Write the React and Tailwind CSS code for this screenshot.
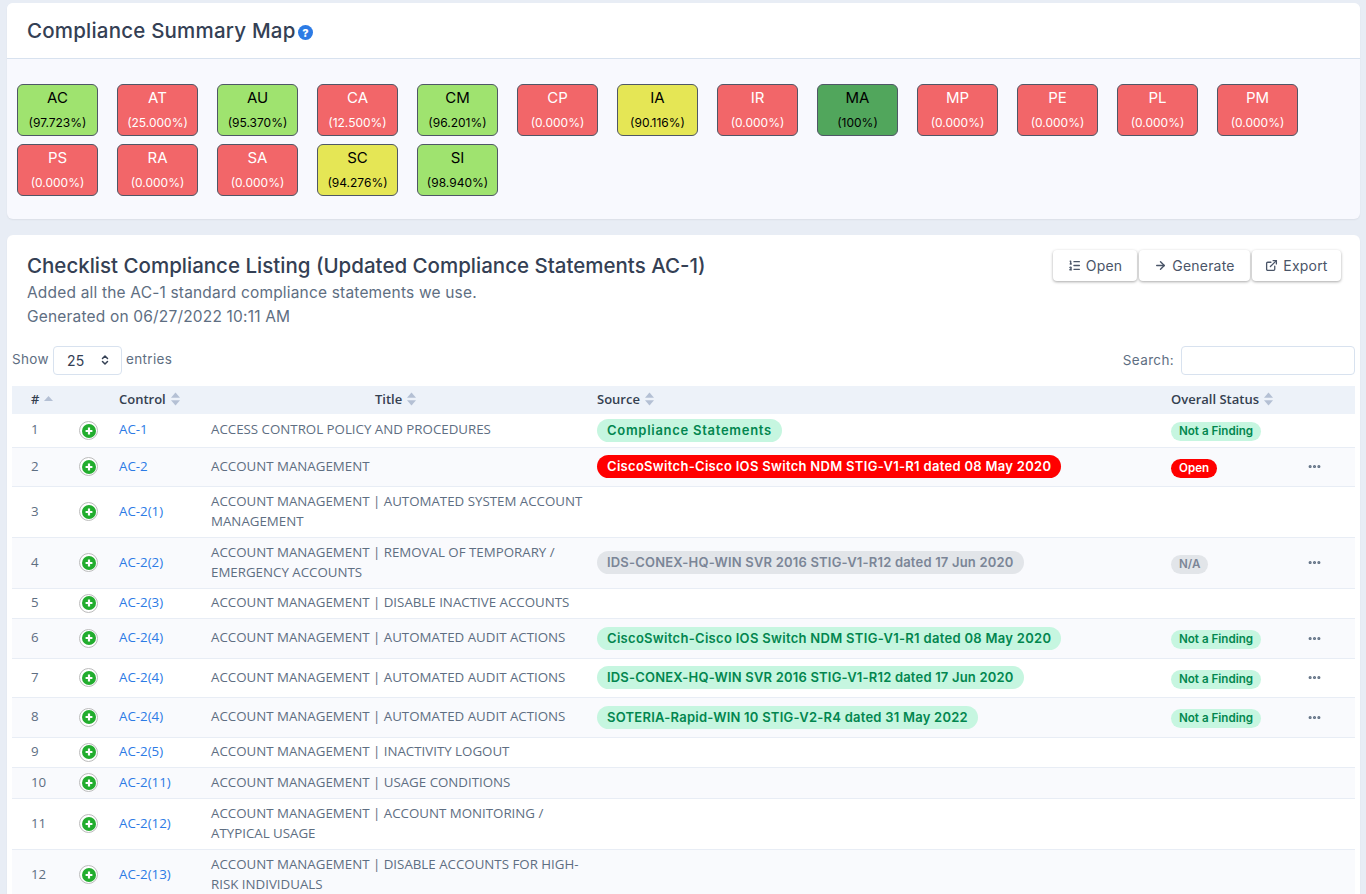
import React from "react";
import { ListOrdered, ArrowRight, ExternalLink, ChevronsUpDown, MoreHorizontal } from "lucide-react";

const tiles = [
  ["AC", "97.723%", "g"], ["AT", "25.000%", "r"], ["AU", "95.370%", "g"], ["CA", "12.500%", "r"], ["CM", "96.201%", "g"],
  ["CP", "0.000%", "r"], ["IA", "90.116%", "y"], ["IR", "0.000%", "r"], ["MA", "100%", "d"], ["MP", "0.000%", "r"],
  ["PE", "0.000%", "r"], ["PL", "0.000%", "r"], ["PM", "0.000%", "r"], ["PS", "0.000%", "r"], ["RA", "0.000%", "r"],
  ["SA", "0.000%", "r"], ["SC", "94.276%", "y"], ["SI", "98.940%", "g"],
];
const tileCls = {
  g: "bg-[#9fe36f] text-black",
  r: "bg-[#f26669] text-white",
  y: "bg-[#e5e655] text-black",
  d: "bg-[#51a65c] text-black",
};

const CISCO = "CiscoSwitch-Cisco IOS Switch NDM STIG-V1-R1 dated 08 May 2020";
const IDS = "IDS-CONEX-HQ-WIN SVR 2016 STIG-V1-R12 dated 17 Jun 2020";
const SOT = "SOTERIA-Rapid-WIN 10 STIG-V2-R4 dated 31 May 2022";
const tr = {
  "Compliance Statements": "tracking-[0.72px]",
  [CISCO]: "tracking-[0.3px]",
  [IDS]: "tracking-[0.19px]",
  [SOT]: "tracking-[0.24px]",
};
const rows = [
  { h: "h-[33px]", c: "AC-1", t: "ACCESS CONTROL POLICY AND PROCEDURES", s: "Compliance Statements", k: "g", st: "Not a Finding" },
  { h: "h-[39px]", c: "AC-2", t: "ACCOUNT MANAGEMENT", s: CISCO, k: "r", st: "Open", m: true },
  { h: "h-[51px]", c: "AC-2(1)", t: "ACCOUNT MANAGEMENT | AUTOMATED SYSTEM ACCOUNT MANAGEMENT" },
  { h: "h-[51px]", c: "AC-2(2)", t: "ACCOUNT MANAGEMENT | REMOVAL OF TEMPORARY / EMERGENCY ACCOUNTS", s: IDS, k: "n", st: "N/A", m: true },
  { h: "h-[30px]", c: "AC-2(3)", t: "ACCOUNT MANAGEMENT | DISABLE INACTIVE ACCOUNTS" },
  { h: "h-[40px]", c: "AC-2(4)", t: "ACCOUNT MANAGEMENT | AUTOMATED AUDIT ACTIONS", s: CISCO, k: "g", st: "Not a Finding", m: true },
  { h: "h-[39px]", c: "AC-2(4)", t: "ACCOUNT MANAGEMENT | AUTOMATED AUDIT ACTIONS", s: IDS, k: "g", st: "Not a Finding", m: true },
  { h: "h-[40px]", c: "AC-2(4)", t: "ACCOUNT MANAGEMENT | AUTOMATED AUDIT ACTIONS", s: SOT, k: "g", st: "Not a Finding", m: true },
  { h: "h-[30px]", c: "AC-2(5)", t: "ACCOUNT MANAGEMENT | INACTIVITY LOGOUT" },
  { h: "h-[31px]", c: "AC-2(11)", t: "ACCOUNT MANAGEMENT | USAGE CONDITIONS" },
  { h: "h-[51px]", c: "AC-2(12)", t: "ACCOUNT MANAGEMENT | ACCOUNT MONITORING / ATYPICAL USAGE" },
  { h: "h-[51px]", c: "AC-2(13)", t: "ACCOUNT MANAGEMENT | DISABLE ACCOUNTS FOR HIGH-RISK INDIVIDUALS" },
];
const badgeCls = {
  g: "bg-[#c6f6e0] text-[#02864f]",
  r: "bg-[#ff0000] text-white",
  n: "bg-[#e2e5e9] text-[#7b8597]",
};

const SortIcon = ({ up }) => (
  <svg width="9" height="14" viewBox="0 0 9 14" className="ml-[5px] inline-block align-[-2px]">
    {up ? (
      <path d="M4.5 4 L9 9 H0 Z" fill="#b4c0d4" />
    ) : (
      <>
        <path d="M4.5 0.5 L9 5.8 H0 Z" fill="#b4c0d4" />
        <path d="M4.5 13.5 L9 8.2 H0 Z" fill="#b4c0d4" />
      </>
    )}
  </svg>
);

const PlusIcon = () => (
  <span className="inline-flex h-[19px] w-[19px] items-center justify-center rounded-full border border-[#bcbcbc] bg-white align-middle">
    <svg width="14" height="14" viewBox="0 0 14 14">
      <circle cx="7" cy="7" r="7" fill="#22ad2e" />
      <path d="M7 3.6 V10.4 M3.6 7 H10.4" stroke="#fff" strokeWidth="2.2" />
    </svg>
  </span>
);

const Btn = ({ icon, children, w }) => (
  <button className={`flex h-[31px] ${w} items-center justify-center gap-[5px] rounded-[4px] bg-white text-[14px] tracking-[0.2px] text-[#4a5568] shadow-[0_1px_3px_rgba(0,0,0,0.35)]`}>
    {icon}
    {children}
  </button>
);

const head = "[font-family:Inter,'Liberation_Sans',sans-serif]";

export default function App() {
  return (
    <div className="h-[894px] overflow-hidden bg-[#e8edf5] pl-[7px] pr-[6px] pt-[3px] font-['Open_Sans',sans-serif] text-[#525f7f]">
      <section className="overflow-hidden rounded-[6px] bg-[#f8f9fe] shadow-[0_1px_2px_rgba(0,0,0,0.06)]">
        <div className={`flex h-[56px] items-center border-b border-[#d8e2ef] bg-white pl-[20px] ${head}`}>
          <h2 className="mt-[2px] text-[20.5px] font-medium leading-none tracking-[0.2px] text-[#344054]">Compliance Summary Map</h2>
          <svg width="15" height="15" viewBox="0 0 15 15" className="ml-[2px] mt-[4px]">
            <circle cx="7.5" cy="7.5" r="7.5" fill="#2c7be5" />
            <text x="7.5" y="11.5" textAnchor="middle" fontSize="11" fontWeight="800" fill="#fff" fontFamily="Inter, sans-serif">?</text>
          </svg>
        </div>
        <div className="flex h-[160px] flex-wrap content-start gap-x-[19px] gap-y-[8px] pl-[10px] pt-[25px] pr-[40px]">
          {tiles.map(([code, pct, k]) => (
            <div key={code} className={`flex h-[52px] w-[81px] flex-col items-center rounded-[6px] border border-[#4f5766] ${tileCls[k]} ${head}`}>
              <span className="mt-[2px] text-[15px] leading-[22px]">{code}</span>
              <span className="mt-[6px] text-[12px] leading-[16px]">({pct})</span>
            </div>
          ))}
        </div>
      </section>

      <section className="mt-[16px] rounded-t-[6px] bg-white pb-4 shadow-[0_1px_2px_rgba(0,0,0,0.06)]">
        <div className="flex justify-between pl-[20px] pr-[19px] pt-[15px]">
          <div className={head}>
            <h2 className="mt-[1px] text-[20.5px] font-medium leading-[29px] text-[#344054]">Checklist Compliance Listing (Updated Compliance Statements AC-1)</h2>
            <p className="text-[15.5px] leading-[25px] tracking-[0.18px] text-[#5e6e82]">Added all the AC-1 standard compliance statements we use.</p>
            <p className="text-[15.5px] leading-[24px] tracking-[0.18px] text-[#5e6e82]">Generated on 06/27/2022 10:11 AM</p>
          </div>
          <div className={`flex gap-[2px] ${head}`}>
            <Btn w="w-[84px]" icon={<ListOrdered size={13} strokeWidth={2.4} />}>Open</Btn>
            <Btn w="w-[111px]" icon={<ArrowRight size={13} strokeWidth={2.6} />}>Generate</Btn>
            <Btn w="w-[89px]" icon={<ExternalLink size={13} strokeWidth={2.4} />}>Export</Btn>
          </div>
        </div>

        <div className={`mt-[16px] flex h-[30px] items-center justify-between pl-[5px] pr-[5px] text-[13.5px] tracking-[0.35px] text-[#5e6e82] ${head}`}>
          <div className="flex items-center">
            <span className="pb-[2px]">Show</span>
            <span className="mx-[4px] flex h-[29px] w-[69px] items-center rounded-[4px] border border-[#d8e2ef] pl-[13px] text-[14px] text-[#344054]">
              25
              <ChevronsUpDown size={12} strokeWidth={3} className="ml-[14px] text-[#344054]" />
            </span>
            <span className="pb-[2px]">entries</span>
          </div>
          <div className="flex items-center">
            <span className="mr-[7px] pt-[1px]">Search:</span>
            <span className="block h-[29px] w-[174px] rounded-[4px] border border-[#d8e2ef] bg-white" />
          </div>
        </div>

        <div className="mt-[11px] pl-[5px] pr-[5px]">
          <table className="w-full table-fixed border-collapse text-[13.3px]">
            <colgroup>
              <col className="w-[58px]" />
              <col className="w-[49px]" />
              <col className="w-[92px]" />
              <col className="w-[386px]" />
              <col className="w-[574px]" />
              <col className="w-[136px]" />
              <col />
            </colgroup>
            <thead>
              <tr className="h-[28px] bg-[#edf2f9] text-left text-[13px] font-semibold text-[#344050]">
                <th className="pl-[19px] font-semibold">#<SortIcon up /></th>
                <th />
                <th className="pl-0 font-semibold">Control<SortIcon /></th>
                <th className="pl-[164px] font-semibold">Title<SortIcon /></th>
                <th className="font-semibold">Source<SortIcon /></th>
                <th className="font-semibold">Overall Status<SortIcon /></th>
                <th />
              </tr>
            </thead>
            <tbody>
              {rows.map((r, i) => (
                <tr key={i} className={`${r.h} border-b border-[#e8edf5] ${i % 2 ? "bg-[#f9fafd]" : "bg-white"}`}>
                  <td className="pl-[19px] text-[#5e6e82]">{i + 1}</td>
                  <td className="pl-[9px]"><PlusIcon /></td>
                  <td className="text-[#2c7be5]">{r.c}</td>
                  <td className="pb-[2px] pr-[10px] leading-[20px] text-[#5e6e82]">{r.t}</td>
                  <td>
                    {r.s && (
                      <span className={`inline-block whitespace-nowrap rounded-full px-[10px] text-[13px] font-semibold leading-[23px] ${tr[r.s]} ${head} ${badgeCls[r.k]}`}>{r.s}</span>
                    )}
                  </td>
                  <td className="pt-[2px]">
                    {r.st && (
                      <span className={`inline-block whitespace-nowrap rounded-full px-[8px] text-[11.6px] font-semibold leading-[19px] ${head} ${badgeCls[r.k]}`}>{r.st}</span>
                    )}
                  </td>
                  <td>
                    {r.m && <MoreHorizontal size={15} strokeWidth={3} className="text-[#5e6e82]" />}
                  </td>
                </tr>
              ))}
            </tbody>
          </table>
        </div>
      </section>
    </div>
  );
}
